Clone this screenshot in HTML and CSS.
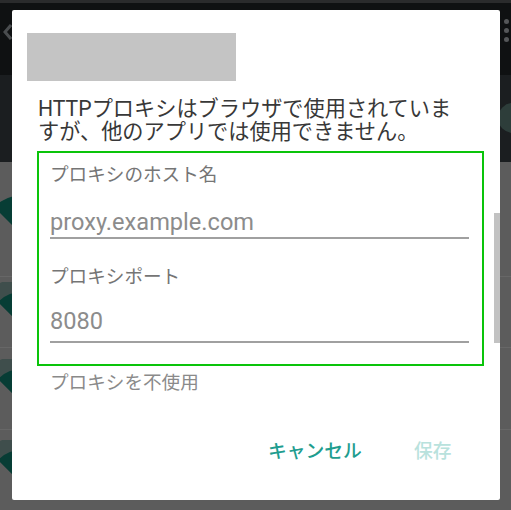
FILE: index.html
```html
<!DOCTYPE html>
<html lang="ja">
<head>
<meta charset="utf-8">
<title>プロキシ</title>
<link rel="stylesheet" href="styles.css">
</head>
<body>
<div class="screen">
  <div class="appbar">
    <div class="statusline"></div>
    <div class="toolbar">
      <svg class="back" width="10" height="18" viewBox="0 0 10 18"><path d="M9 2 L3 9 L9 16" fill="none" stroke="#4a4d4f" stroke-width="3"/></svg>
      <div class="dots"><span></span><span></span><span></span></div>
    </div>
    <div class="tabs"><div class="fab"></div></div>
  </div>
  <div class="list">
    <div class="row r1"><svg class="wifi" width="14" height="60" viewBox="0 0 14 60"><path d="M24 48 L-6 18 A43 43 0 0 1 54 18 Z" fill="#073d35"/></svg></div>
    <div class="row r2"><svg class="wifi" width="14" height="60" viewBox="0 0 14 60"><path d="M24 46 L-12 10 A51 51 0 0 1 60 10 Z" fill="#3f4e4c"/><path d="M24 46 L-2 20 A37 37 0 0 1 50 20 Z" fill="#073d35"/></svg></div>
    <div class="row r3"><svg class="wifi" width="14" height="60" viewBox="0 0 14 60"><path d="M24 46 L-12 10 A51 51 0 0 1 60 10 Z" fill="#3f4e4c"/><path d="M24 46 L-2 20 A37 37 0 0 1 50 20 Z" fill="#073d35"/></svg></div>
    <div class="row r4"><svg class="wifi" width="14" height="60" viewBox="0 0 14 60"><path d="M24 46 L-12 10 A51 51 0 0 1 60 10 Z" fill="#3f4e4c"/><path d="M24 46 L-2 20 A37 37 0 0 1 50 20 Z" fill="#073d35"/></svg></div>
  </div>

  <div class="dialog">
    <div class="title-redacted"></div>
    <p class="message">HTTPプロキシはブラウザで使用されていますが、他のアプリでは使用できません。</p>
    <div class="fields">
      <div class="label">プロキシのホスト名</div>
      <div class="input">proxy.example.com</div>
      <div class="label label2">プロキシポート</div>
      <div class="input input2">8080</div>
    </div>
    <div class="option">プロキシを不使用</div>
    <div class="actions">
      <span class="btn cancel">キャンセル</span>
      <span class="btn save">保存</span>
    </div>
    <div class="scrollbar"></div>
  </div>
</div>
</body>
</html>
```
FILE: styles.css
```css
html, body {
  margin: 0;
  padding: 0;
  background: #555555;
}
.screen {
  position: relative;
  width: 511px;
  height: 510px;
  overflow: hidden;
  background: #5c5c5c;
  font-family: "Roboto", "Noto Sans CJK JP", sans-serif;
}
.appbar {
  height: 162px;
  display: flex;
  flex-direction: column;
}
.statusline {
  height: 3px;
  background: #2a2b2c;
}
.toolbar {
  height: 72px;
  background: #0f1112;
  display: flex;
  justify-content: space-between;
  align-items: flex-start;
}
.back {
  margin: 20px 0 0 2px;
}
.dots {
  display: flex;
  flex-direction: column;
  gap: 4px;
  margin: 16px 2px 0 0;
}
.dots span {
  width: 5px;
  height: 5px;
  border-radius: 50%;
  background: #555759;
}
.tabs {
  flex: 1;
  background: #1b1e20;
  display: flex;
  justify-content: flex-end;
  align-items: flex-start;
}
.fab {
  width: 30px;
  height: 30px;
  border-radius: 50%;
  background: #2d3d3a;
  margin: 28px -17px 0 0;
}
.list {
  display: flex;
  flex-direction: column;
}
.row {
  border-bottom: 1px solid #676767;
  display: flex;
  align-items: center;
}
.r1 { height: 114px; }
.r2 { height: 70px; }
.r3 { height: 81px; }
.r4 { height: 80px; border-bottom: none; }
.wifi { display: block; }

.dialog {
  position: absolute;
  left: 12px;
  top: 10px;
  width: 488px;
  height: 490px;
  background: #ffffff;
  border-radius: 2px;
  box-sizing: border-box;
  padding: 23px 0 0 15px;
  display: flex;
  flex-direction: column;
  align-items: flex-start;
}
.title-redacted {
  width: 209px;
  height: 48px;
  background: #c4c4c4;
}
.message {
  margin: 16px 0 0 11px;
  width: 430px;
  font-size: 21.2px;
  line-height: 23px;
  color: #383838;
}
.fields {
  margin: 8px 0 0 10px;
  width: 447px;
  height: 215px;
  box-sizing: border-box;
  border: 2px solid #0ac40a;
  padding: 10px 13px 0 11px;
}
.label {
  font-size: 18.6px;
  line-height: 24px;
  color: #757575;
}
.input {
  margin-top: 21px;
  font-size: 23.6px;
  line-height: 28px;
  color: #8c8c8c;
  border-bottom: 2px solid #a0a0a0;
  padding-bottom: 1px;
}
.label2 { margin-top: 26px; }
.input2 { margin-top: 18px; padding-bottom: 6px; }
.option {
  margin: 5px 0 0 23px;
  font-size: 18.6px;
  line-height: 24px;
  color: #8a8a8a;
}
.actions {
  margin: 45px 0 0 241px;
  display: flex;
  gap: 52px;
}
.btn {
  font-size: 18.8px;
  line-height: 24px;
  font-weight: 500;
}
.cancel { color: #1f9d8f; }
.save { color: #b9e2dd; }
.scrollbar {
  position: absolute;
  right: 0;
  top: 203px;
  width: 6px;
  height: 130px;
  background: #c2c2c2;
}
```
